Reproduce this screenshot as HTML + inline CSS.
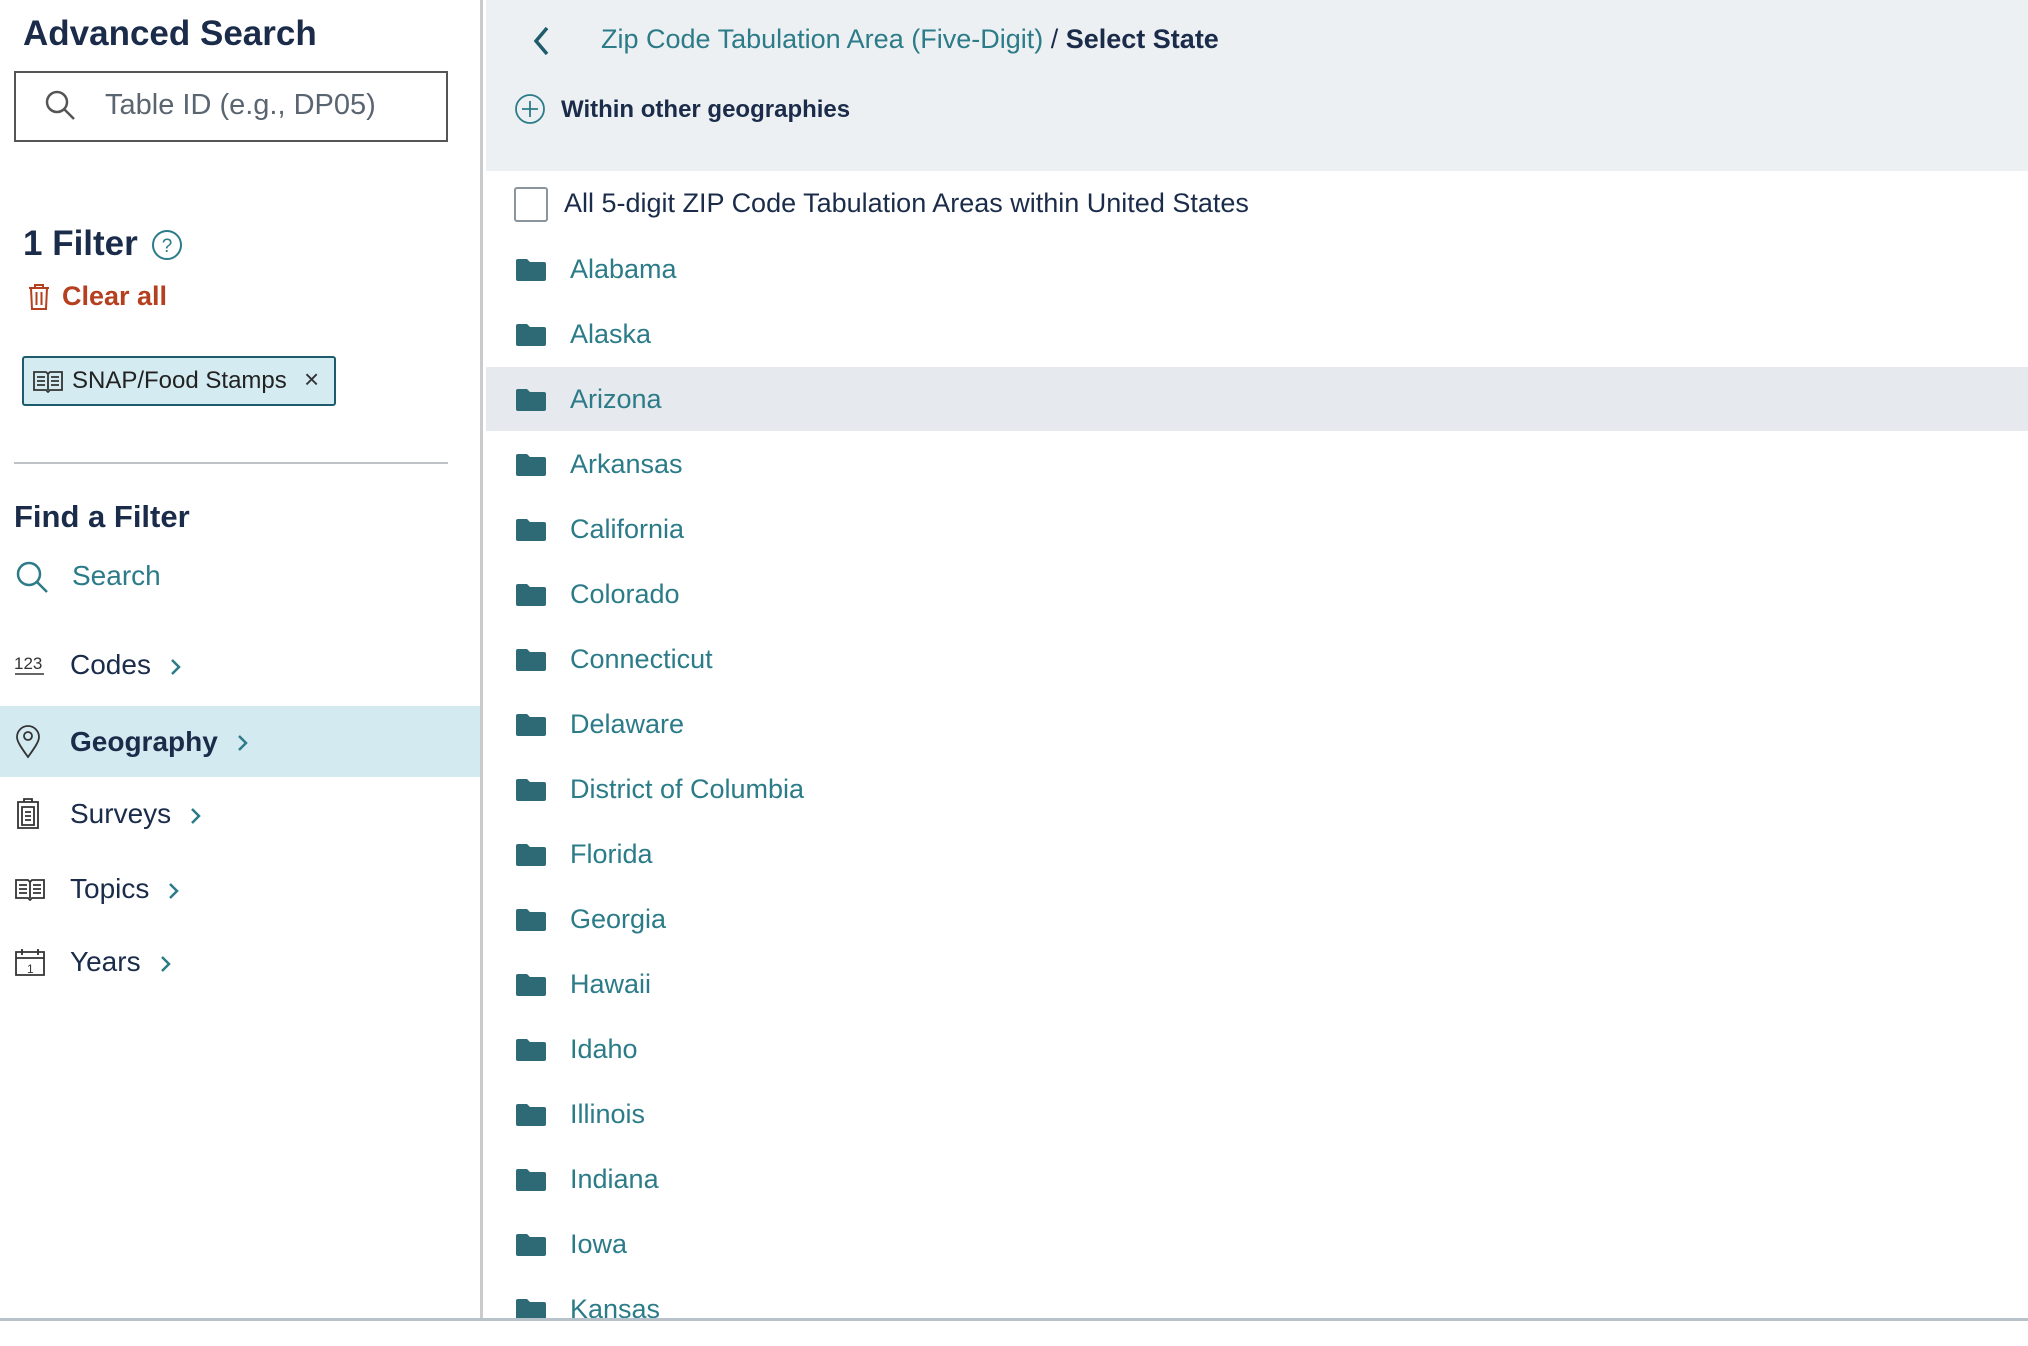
<!DOCTYPE html>
<html><head><meta charset="utf-8"><style>
*{margin:0;padding:0;box-sizing:border-box}
body{width:2028px;height:1346px;background:#fff;font-family:"Liberation Sans",Arial,sans-serif;position:relative;overflow:hidden;color:#1b2c4a}
.a{position:absolute;white-space:nowrap}
.side{position:absolute;left:0;top:0;width:483px;height:1318px;border-right:3px solid #c9cbcd}
.nav{position:absolute;left:0;width:480px;height:70px}
.nav .t{position:absolute;left:70px;top:50%;transform:translateY(-50%);font-size:28px;color:#1b2c4a}
.nav svg.i{position:absolute;left:14px;top:50%;transform:translateY(-50%)}
.chev{display:inline-block;margin-left:18px;vertical-align:middle}
.row{position:absolute;left:484px;width:1544px;height:65px}
.row .f{position:absolute;left:31px;top:50%;transform:translateY(-50%)}
.row .t{position:absolute;left:86px;top:50%;transform:translateY(-52%);font-size:27px;color:#2b7b88}
</style></head><body>
<div class="side">
  <div class="a" style="left:23px;top:14px;font-size:35px;font-weight:bold;color:#1b2c4a">Advanced Search</div>
  <div class="a" style="left:14px;top:71px;width:434px;height:71px;border:2px solid #555"></div>
  <svg class="a" style="left:44px;top:89px" width="32" height="32" viewBox="0 0 32 32"><circle cx="13" cy="13" r="10" fill="none" stroke="#555" stroke-width="2.5"/><line x1="20" y1="20" x2="30" y2="30" stroke="#555" stroke-width="2.5"/></svg>
  <div class="a" style="left:105px;top:89px;font-size:29px;color:#5a6570">Table ID (e.g., DP05)</div>

  <div class="a" style="left:23px;top:224px;font-size:35px;font-weight:bold;color:#1b2c4a">1 Filter</div>
  <svg class="a" style="left:151px;top:229px" width="32" height="32" viewBox="0 0 32 32"><circle cx="16" cy="16" r="14" fill="none" stroke="#2b7b88" stroke-width="2"/><text x="16" y="23" text-anchor="middle" font-size="19" fill="#2b7b88" font-family="Liberation Sans">?</text></svg>
  <svg class="a" style="left:27px;top:283px" width="24" height="28" viewBox="0 0 24 28"><path d="M2 5h20M8 5V2h8v3M4 5l1 21h14l1-21M9.5 9v13M14.5 9v13" fill="none" stroke="#b5401f" stroke-width="2"/></svg>
  <div class="a" style="left:62px;top:281px;font-size:27px;font-weight:bold;color:#b5401f">Clear all</div>

  <div class="a" style="left:22px;top:356px;width:314px;height:50px;background:#d4ebf1;border:2px solid #1f5c6b;border-radius:3px"></div>
  <svg class="a" style="left:32px;top:369px" width="32" height="24" viewBox="0 0 32 24"><path d="M2 3h12l2 2 2-2h12v18H18l-2 2-2-2H2z M16 5v16 M5 8h8M5 12h8M5 16h8M19 8h8M19 12h8M19 16h8" fill="none" stroke="#333" stroke-width="1.8"/></svg>
  <div class="a" style="left:72px;top:367px;font-size:24px;color:#222">SNAP/Food Stamps</div>
  <div class="a" style="left:304px;top:364px;font-size:26px;color:#333">×</div>

  <div class="a" style="left:14px;top:462px;width:434px;height:2px;background:#bfc3c7"></div>
  <div class="a" style="left:14px;top:499px;font-size:31px;font-weight:bold;color:#1b2c4a">Find a Filter</div>
  <svg class="a" style="left:15px;top:560px" width="34" height="34" viewBox="0 0 34 34"><circle cx="14" cy="14" r="11" fill="none" stroke="#2b7b88" stroke-width="2.5"/><line x1="22" y1="22" x2="32" y2="32" stroke="#2b7b88" stroke-width="2.5"/></svg>
  <div class="a" style="left:72px;top:560px;font-size:28px;color:#2b7b88">Search</div>

  <div class="nav" style="top:630px"><svg class="i" width="32" height="22" viewBox="0 0 32 22"><text x="0" y="15" font-size="17" fill="#333" font-family="Liberation Sans">123</text><line x1="1" y1="20" x2="30" y2="20" stroke="#333" stroke-width="1.5"/></svg><span class="t">Codes<svg class="chev" width="14" height="20" viewBox="0 0 14 20"><path d="M3 3l7 7-7 7" fill="none" stroke="#2b7b88" stroke-width="2.5"/></svg></span></div>
  <div class="nav" style="top:706px;height:71px;background:#d3eaf0"><svg class="i" width="28" height="34" viewBox="0 0 28 34"><path d="M14 32C6 21 3 16 3 12a11 11 0 0 1 22 0c0 4-3 9-11 20z" fill="none" stroke="#333" stroke-width="1.8"/><circle cx="14" cy="11" r="4" fill="none" stroke="#333" stroke-width="1.8"/></svg><span class="t" style="font-weight:bold">Geography<svg class="chev" width="14" height="20" viewBox="0 0 14 20"><path d="M3 3l7 7-7 7" fill="none" stroke="#2b7b88" stroke-width="2.5"/></svg></span></div>
  <div class="nav" style="top:779px"><svg class="i" width="28" height="32" viewBox="0 0 28 32"><path d="M4 4h20v26H4z M10 4V1h8v3 M8 9h12v18H8z M11 14h6M11 18h6M11 22h6" fill="none" stroke="#333" stroke-width="1.8"/></svg><span class="t">Surveys<svg class="chev" width="14" height="20" viewBox="0 0 14 20"><path d="M3 3l7 7-7 7" fill="none" stroke="#2b7b88" stroke-width="2.5"/></svg></span></div>
  <div class="nav" style="top:854px"><svg class="i" width="32" height="24" viewBox="0 0 32 24"><path d="M2 3h12l2 2 2-2h12v18H18l-2 2-2-2H2z M16 5v16 M5 8h8M5 12h8M5 16h8M19 8h8M19 12h8M19 16h8" fill="none" stroke="#333" stroke-width="1.8"/></svg><span class="t">Topics<svg class="chev" width="14" height="20" viewBox="0 0 14 20"><path d="M3 3l7 7-7 7" fill="none" stroke="#2b7b88" stroke-width="2.5"/></svg></span></div>
  <div class="nav" style="top:927px"><svg class="i" width="32" height="30" viewBox="0 0 32 30"><path d="M2 5h28v23H2z M2 11h28 M8 2v6 M24 2v6" fill="none" stroke="#333" stroke-width="1.8"/><text x="13" y="26" font-size="12" fill="#333" font-family="Liberation Sans">1</text></svg><span class="t">Years<svg class="chev" width="14" height="20" viewBox="0 0 14 20"><path d="M3 3l7 7-7 7" fill="none" stroke="#2b7b88" stroke-width="2.5"/></svg></span></div>
</div>

<div class="a" style="left:486px;top:0;width:1542px;height:171px;background:#edf0f3"></div>
<svg class="a" style="left:530px;top:25px" width="24" height="32" viewBox="0 0 24 32"><path d="M17 3L6 16l11 13" fill="none" stroke="#1f5c6b" stroke-width="3.5"/></svg>
<div class="a" style="left:601px;top:24px;font-size:27px;color:#2b7b88">Zip Code Tabulation Area (Five-Digit) <span style="color:#1b2c4a">/</span> <b style="color:#1b2c4a">Select State</b></div>
<svg class="a" style="left:514px;top:93px" width="32" height="32" viewBox="0 0 32 32"><circle cx="16" cy="16" r="14" fill="none" stroke="#2b7b88" stroke-width="1.8"/><path d="M16 8v16M8 16h16" stroke="#2b7b88" stroke-width="1.8"/></svg>
<div class="a" style="left:561px;top:96px;font-size:24px;font-weight:bold;color:#1b2c4a">Within other geographies</div>

<div class="a" style="left:514px;top:187px;width:34px;height:35px;border:2px solid #8a949c;border-radius:3px"></div>
<div class="a" style="left:564px;top:188px;font-size:27px;color:#1b2c4a">All 5-digit ZIP Code Tabulation Areas within United States</div>

<div class="row" style="top:367px;left:486px;height:64px;background:#e6e9ed"></div>
<div id="list"></div>
<script>
var s=["Alabama","Alaska","Arizona","Arkansas","California","Colorado","Connecticut","Delaware","District of Columbia","Florida","Georgia","Hawaii","Idaho","Illinois","Indiana","Iowa","Kansas"];
var h="";
s.forEach(function(n,i){var c=269+i*65;h+='<div class="row" style="top:'+(c-32)+'px"><svg class="f" width="32" height="24" viewBox="0 0 32 24"><path d="M1 3a2 2 0 0 1 2-2h9l3 3h14a2 2 0 0 1 2 2v15a2 2 0 0 1-2 2H3a2 2 0 0 1-2-2z" fill="#2e6a76"/></svg><span class="t">'+n+'</span></div>';});
document.getElementById("list").innerHTML=h;
</script>
<div class="a" style="left:0;top:1318px;width:2028px;height:28px;background:#fff;border-top:3px solid #b8c2ca"></div>
</body></html>
